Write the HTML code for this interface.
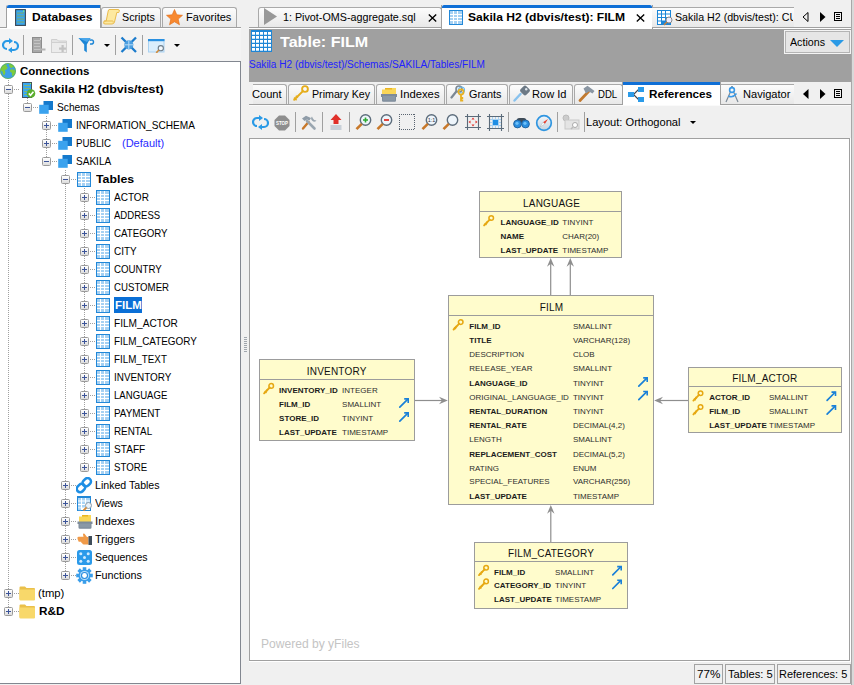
<!DOCTYPE html><html><head><meta charset='utf-8'><style>
html,body{margin:0;padding:0}
body{width:854px;height:685px;position:relative;overflow:hidden;background:#f0f0f0;font-family:'Liberation Sans',sans-serif}
.t{position:absolute;white-space:pre;line-height:1}
.b{position:absolute;display:block}
</style></head><body>
<div class='b' style='left:851px;top:0px;width:3px;height:685px;background:#d9d9d9;border-left:1px solid #a8a8a8;box-sizing:border-box'></div>
<div class='b' style='left:0px;top:28px;width:241px;height:33px;background:#f3f3f3'></div>
<div class='b' style='left:0px;top:27px;width:241px;height:1px;background:#a0a0a0'></div>
<div class='b' style='left:0px;top:28px;width:241px;height:1px;background:#fff'></div>
<div class='b' style='left:6px;top:5px;width:95px;height:23px;background:#fff;border-left:1px solid #a0a0a0;border-right:1px solid #a0a0a0;box-sizing:border-box;border-top-left-radius:2px'></div>
<div class='b' style='left:7px;top:5px;width:93px;height:3px;background:#0f6fd6;border-top-left-radius:2px'></div>
<div class='b' style='left:101px;top:7px;width:60px;height:20px;background:linear-gradient(#fcfcfc,#e8e8e8);border:1px solid #a9a9a9;border-bottom:none;border-radius:3px 3px 0 0;box-sizing:border-box'></div>
<div class='b' style='left:162px;top:7px;width:75px;height:20px;background:linear-gradient(#fcfcfc,#e8e8e8);border:1px solid #a9a9a9;border-bottom:none;border-radius:3px 3px 0 0;box-sizing:border-box'></div>
<svg class='b' style='left:15px;top:9px;' width='11' height='17' viewBox='0 0 11 17'><rect x='0' y='0' width='11' height='17' fill='#3e4c5a' rx='0.5'/><rect x='1.2' y='1.2' width='8.6' height='14.6' fill='#38a8f0'/><g fill='#8da650'><rect x='2' y='3.6' width='7' height='0.9'/><rect x='2' y='6.6' width='7' height='0.9'/><rect x='2' y='9.6' width='7' height='0.9'/><rect x='2' y='12.6' width='7' height='0.9'/></g><rect x='8' y='1.5' width='1.3' height='1.2' fill='#8f6'/></svg>
<div class='t' style='left:32px;top:11.69px;font-size:11px;font-weight:700;color:#000;transform:scaleX(1.099);transform-origin:0 0;'>Databases</div>
<svg class='b' style='left:103px;top:8px;' width='17' height='17' viewBox='0 0 17 17'><path d='M6 1.5 H15 Q17 1.5 16.2 3.5 L15.8 4.5 H13.8 L11.5 14 Q11 16 9 16 H2 Q0 16 0.8 14 L1.2 13 H3.2 L5.2 3 Q5.6 1.5 6 1.5Z' fill='#fde9a0' stroke='#e9bb4e' stroke-width='1'/><path d='M1.2 13 H9.5 Q10.5 13 10.2 14.5' fill='none' stroke='#e9bb4e' stroke-width='1'/></svg>
<div class='t' style='left:121.7px;top:11.69px;font-size:11px;font-weight:400;color:#000;transform:scaleX(0.9747);transform-origin:0 0;'>Scripts</div>
<svg class='b' style='left:166px;top:9px;' width='17' height='17' viewBox='0 0 17 17'><path d='M8.5 0.5 L10.8 5.8 L16.5 6.3 L12.2 10.1 L13.5 15.8 L8.5 12.8 L3.5 15.8 L4.8 10.1 L0.5 6.3 L6.2 5.8Z' fill='#f7882f' stroke='#e06a10' stroke-width='0.6'/></svg>
<div class='t' style='left:186px;top:11.69px;font-size:11px;font-weight:400;color:#000;transform:scaleX(1.0034);transform-origin:0 0;'>Favorites</div>
<svg class='b' style='left:2px;top:38px;' width='17' height='15' viewBox='0 0 17 15'><g fill='none' stroke='#2a9ae6' stroke-width='2.2'><path d='M7 3 H5 A4 4 0 0 0 5 11'/><path d='M10 12 H12 A4 4 0 0 0 12 4'/></g><path d='M7 0 L11 3 L7 6Z' fill='#2a9ae6'/><path d='M10 9 L6 12 L10 15Z' fill='#2a9ae6'/></svg>
<div class='b' style='left:23px;top:35px;width:1px;height:20px;background:#a0a0a0'></div>
<svg class='b' style='left:32px;top:37px;' width='14' height='17' viewBox='0 0 14 17'><rect x='0.5' y='0.5' width='9' height='15' fill='#a9a9a9' stroke='#8c8c8c'/><g fill='#c4c4c4'><rect x='2' y='3' width='6' height='1'/><rect x='2' y='6' width='6' height='1'/><rect x='2' y='9' width='6' height='1'/><rect x='2' y='12' width='6' height='1'/></g><rect x='8' y='1.5' width='1' height='1' fill='#fff'/><rect x='8' y='11.5' width='5.5' height='2' fill='#b4b4b4'/></svg>
<svg class='b' style='left:51px;top:38px;' width='17' height='16' viewBox='0 0 17 16'><path d='M0.5 1.5 H6 L7.5 3 H15.5 V14.5 H0.5Z' fill='#e4e4e4' stroke='#cfcfcf'/><rect x='0.5' y='4.5' width='15' height='10' fill='#ececec' stroke='#d0d0d0'/><rect x='10.5' y='7' width='2.2' height='7' fill='#c2c2c2'/><rect x='8' y='9.5' width='7' height='2.2' fill='#c2c2c2'/></svg>
<div class='b' style='left:72px;top:35px;width:1px;height:20px;background:#a0a0a0'></div>
<svg class='b' style='left:78px;top:37px;' width='17' height='17' viewBox='0 0 17 17'><path d='M0.5 1 H12.5 L8.8 7.5 V15.5 L6.2 13.5 V7.5Z' fill='#1d86d6'/><path d='M0.5 1 H12.5 L9 5Z' fill='#4aa6ea'/><path d='M11.5 3.2 Q15.5 2.2 15.5 5 Q15.5 7.5 12 7' fill='none' stroke='#1d86d6' stroke-width='1.5'/></svg>
<svg class='b' style='left:104px;top:44px;' width='6' height='3' viewBox='0 0 6 3'><path d='M0 0H6L3 3Z' fill='#000'/></svg>
<div class='b' style='left:115px;top:35px;width:1px;height:20px;background:#a0a0a0'></div>
<svg class='b' style='left:120px;top:36px;' width='18' height='18' viewBox='0 0 18 18'><g stroke='#1b7bcc' stroke-width='2.3'><path d='M1.5 1.5 L16 16'/><path d='M16 1.5 L1.5 16'/></g><circle cx='8.8' cy='8.8' r='4.6' fill='#4d9fe0'/><path d='M8.8 4.5 V13 M4.5 8.8 H13' stroke='#b8dcf6' stroke-width='1'/></svg>
<div class='b' style='left:142px;top:35px;width:1px;height:20px;background:#a0a0a0'></div>
<svg class='b' style='left:148px;top:39px;' width='17' height='14' viewBox='0 0 17 14'><rect x='0.5' y='0.5' width='15.5' height='12.5' fill='#dbeefc' stroke='#a9d2f2'/><rect x='0' y='0' width='16.5' height='2.2' fill='#2a90e0'/><circle cx='12.8' cy='9.2' r='2.6' fill='#f4f8fb' stroke='#6e7e8c' stroke-width='1.1'/><path d='M11 11 L8.2 13.8' stroke='#d08a3a' stroke-width='1.7'/></svg>
<svg class='b' style='left:174px;top:44px;' width='6' height='3' viewBox='0 0 6 3'><path d='M0 0H6L3 3Z' fill='#000'/></svg>
<div class='b' style='left:0px;top:61px;width:241px;height:623px;background:#fff;border-top:1px solid #828790;border-right:1px solid #828790;border-bottom:1px solid #828790;box-sizing:border-box'></div>
<div class='b' style='left:8px;top:80px;width:1px;height:532px;background:repeating-linear-gradient(180deg,#a0a0a0 0 1px,transparent 1px 2px)'></div>
<div class='b' style='left:27px;top:98px;width:1px;height:10px;background:repeating-linear-gradient(180deg,#a0a0a0 0 1px,transparent 1px 2px)'></div>
<div class='b' style='left:46px;top:116px;width:1px;height:46px;background:repeating-linear-gradient(180deg,#a0a0a0 0 1px,transparent 1px 2px)'></div>
<div class='b' style='left:65px;top:170px;width:1px;height:406px;background:repeating-linear-gradient(180deg,#a0a0a0 0 1px,transparent 1px 2px)'></div>
<div class='b' style='left:84px;top:188px;width:1px;height:280px;background:repeating-linear-gradient(180deg,#a0a0a0 0 1px,transparent 1px 2px)'></div>
<svg class='b' style='left:0px;top:63px;' width='17' height='17' viewBox='0 0 17 17'><circle cx='8' cy='8' r='7.8' fill='#3d9fe6'/><path d='M2.2 3.2 Q4.5 1 7 1.2 L6.2 3 L7.8 4.2 L6.5 6.5 L4.8 7 L5.5 9.5 L4.2 12.5 L3 11 L2.6 8.8 L0.6 7.2 Q0.8 5 2.2 3.2Z' fill='#7dcb3c'/><path d='M9.5 0.8 Q13 1.6 14.8 4.5 L12.5 4 L11.5 5.5 L10 4.2 L9 2.2Z M9.8 6.8 L13 6.2 L15.4 8 Q15.2 11 13 13 L11.8 12.2 L12 10 L10.2 8.8Z' fill='#7dcb3c'/><circle cx='8' cy='8' r='7.6' fill='none' stroke='#5bb33a' stroke-width='0.7'/></svg>
<div class='t' style='left:19.5px;top:65.69px;font-size:11px;font-weight:700;color:#000;transform:scaleX(1.0423);transform-origin:0 0;'>Connections</div>
<div class='b' style='left:4px;top:85px;width:9px;height:9px;box-sizing:border-box;border:1px solid #9a9a9a;border-radius:1.5px;background:linear-gradient(#fff,#dcdcdc)'></div>
<div class='b' style='left:6px;top:89px;width:5px;height:1px;background:#3c5499'></div>
<div class='b' style='left:14px;top:89px;width:5px;height:1px;background:repeating-linear-gradient(90deg,#a0a0a0 0 1px,transparent 1px 2px)'></div>
<svg class='b' style='left:19px;top:81px;' width='17' height='17' viewBox='0 0 17 17'><rect x='3' y='1' width='10' height='16' fill='#44515e'/><rect x='4' y='2' width='8' height='14' fill='#3aa8f0'/><g fill='#9ab852'><rect x='5' y='4' width='6' height='0.8'/><rect x='5' y='7' width='6' height='0.8'/><rect x='5' y='10' width='6' height='0.8'/><rect x='5' y='13' width='6' height='0.8'/></g><rect x='11' y='2' width='1' height='1' fill='#8f6'/><circle cx='12' cy='12.5' r='4.3' fill='#5aae2e'/><path d='M9.8 12.4 L11.5 14.2 L14.4 10.8' fill='none' stroke='#fff' stroke-width='1.6'/></svg>
<div class='t' style='left:38.5px;top:83.69px;font-size:11px;font-weight:700;color:#000;transform:scaleX(1.1272);transform-origin:0 0;'>Sakila H2 (dbvis/test)</div>
<div class='b' style='left:23px;top:103px;width:9px;height:9px;box-sizing:border-box;border:1px solid #9a9a9a;border-radius:1.5px;background:linear-gradient(#fff,#dcdcdc)'></div>
<div class='b' style='left:25px;top:107px;width:5px;height:1px;background:#3c5499'></div>
<div class='b' style='left:33px;top:107px;width:5px;height:1px;background:repeating-linear-gradient(90deg,#a0a0a0 0 1px,transparent 1px 2px)'></div>
<svg class='b' style='left:38px;top:99px;' width='17' height='17' viewBox='0 0 17 17'><rect x='5.5' y='2' width='9.5' height='9' fill='#1479cc'/><rect x='1.2' y='5.8' width='9.5' height='9' fill='#3aa2ee'/></svg>
<div class='t' style='left:57px;top:101.69px;font-size:11px;font-weight:400;color:#000;transform:scaleX(0.9296);transform-origin:0 0;'>Schemas</div>
<div class='b' style='left:42px;top:121px;width:9px;height:9px;box-sizing:border-box;border:1px solid #9a9a9a;border-radius:1.5px;background:linear-gradient(#fff,#dcdcdc)'></div>
<div class='b' style='left:44px;top:125px;width:5px;height:1px;background:#3c5499'></div>
<div class='b' style='left:46px;top:123px;width:1px;height:5px;background:#3c5499'></div>
<div class='b' style='left:52px;top:125px;width:5px;height:1px;background:repeating-linear-gradient(90deg,#a0a0a0 0 1px,transparent 1px 2px)'></div>
<svg class='b' style='left:57px;top:117px;' width='17' height='17' viewBox='0 0 17 17'><rect x='5.5' y='2' width='9.5' height='9' fill='#1479cc'/><rect x='1.2' y='5.8' width='9.5' height='9' fill='#3aa2ee'/></svg>
<div class='t' style='left:76px;top:119.69px;font-size:11px;font-weight:400;color:#000;transform:scaleX(0.9193);transform-origin:0 0;'>INFORMATION_SCHEMA</div>
<div class='b' style='left:42px;top:139px;width:9px;height:9px;box-sizing:border-box;border:1px solid #9a9a9a;border-radius:1.5px;background:linear-gradient(#fff,#dcdcdc)'></div>
<div class='b' style='left:44px;top:143px;width:5px;height:1px;background:#3c5499'></div>
<div class='b' style='left:46px;top:141px;width:1px;height:5px;background:#3c5499'></div>
<div class='b' style='left:52px;top:143px;width:5px;height:1px;background:repeating-linear-gradient(90deg,#a0a0a0 0 1px,transparent 1px 2px)'></div>
<svg class='b' style='left:57px;top:135px;' width='17' height='17' viewBox='0 0 17 17'><rect x='5.5' y='2' width='9.5' height='9' fill='#1479cc'/><rect x='1.2' y='5.8' width='9.5' height='9' fill='#3aa2ee'/></svg>
<div class='t' style='left:76px;top:137.69px;font-size:11px;font-weight:400;color:#000;transform:scaleX(0.8826);transform-origin:0 0;'>PUBLIC</div>
<div class='t' style='left:121.7px;top:137.69px;font-size:11px;font-weight:400;color:#2a2aff;transform:scaleX(1.0003);transform-origin:0 0;'>(Default)</div>
<div class='b' style='left:42px;top:157px;width:9px;height:9px;box-sizing:border-box;border:1px solid #9a9a9a;border-radius:1.5px;background:linear-gradient(#fff,#dcdcdc)'></div>
<div class='b' style='left:44px;top:161px;width:5px;height:1px;background:#3c5499'></div>
<div class='b' style='left:52px;top:161px;width:5px;height:1px;background:repeating-linear-gradient(90deg,#a0a0a0 0 1px,transparent 1px 2px)'></div>
<svg class='b' style='left:57px;top:153px;' width='17' height='17' viewBox='0 0 17 17'><rect x='5.5' y='2' width='9.5' height='9' fill='#1479cc'/><rect x='1.2' y='5.8' width='9.5' height='9' fill='#3aa2ee'/></svg>
<div class='t' style='left:76px;top:155.69px;font-size:11px;font-weight:400;color:#000;transform:scaleX(0.9139);transform-origin:0 0;'>SAKILA</div>
<div class='b' style='left:61px;top:175px;width:9px;height:9px;box-sizing:border-box;border:1px solid #9a9a9a;border-radius:1.5px;background:linear-gradient(#fff,#dcdcdc)'></div>
<div class='b' style='left:63px;top:179px;width:5px;height:1px;background:#3c5499'></div>
<div class='b' style='left:71px;top:179px;width:5px;height:1px;background:repeating-linear-gradient(90deg,#a0a0a0 0 1px,transparent 1px 2px)'></div>
<svg class='b' style='left:76px;top:171px;' width='17' height='17' viewBox='0 0 17 17'><g shape-rendering='crispEdges'><rect x='1' y='1' width='14' height='15' fill='#2288d8'/><rect x='2' y='2' width='12' height='13' fill='#fff'/><g fill='#a6d1f3'><rect x='2' y='2' width='3' height='3'/><rect x='2' y='6' width='3' height='2'/><rect x='2' y='9' width='3' height='2'/><rect x='2' y='12' width='3' height='3'/><rect x='6' y='2' width='3' height='3'/><rect x='6' y='6' width='3' height='2'/><rect x='6' y='9' width='3' height='2'/><rect x='6' y='12' width='3' height='3'/><rect x='10' y='2' width='4' height='3'/><rect x='10' y='6' width='4' height='2'/><rect x='10' y='9' width='4' height='2'/><rect x='10' y='12' width='4' height='3'/></g></g></svg>
<div class='t' style='left:95.5px;top:173.69px;font-size:11px;font-weight:700;color:#000;transform:scaleX(1.1202);transform-origin:0 0;'>Tables</div>
<div class='b' style='left:80px;top:193px;width:9px;height:9px;box-sizing:border-box;border:1px solid #9a9a9a;border-radius:1.5px;background:linear-gradient(#fff,#dcdcdc)'></div>
<div class='b' style='left:82px;top:197px;width:5px;height:1px;background:#3c5499'></div>
<div class='b' style='left:84px;top:195px;width:1px;height:5px;background:#3c5499'></div>
<div class='b' style='left:90px;top:197px;width:5px;height:1px;background:repeating-linear-gradient(90deg,#a0a0a0 0 1px,transparent 1px 2px)'></div>
<svg class='b' style='left:95px;top:189px;' width='17' height='17' viewBox='0 0 17 17'><g shape-rendering='crispEdges'><rect x='1' y='1' width='14' height='15' fill='#2288d8'/><rect x='2' y='2' width='12' height='13' fill='#fff'/><g fill='#a6d1f3'><rect x='2' y='2' width='3' height='3'/><rect x='2' y='6' width='3' height='2'/><rect x='2' y='9' width='3' height='2'/><rect x='2' y='12' width='3' height='3'/><rect x='6' y='2' width='3' height='3'/><rect x='6' y='6' width='3' height='2'/><rect x='6' y='9' width='3' height='2'/><rect x='6' y='12' width='3' height='3'/><rect x='10' y='2' width='4' height='3'/><rect x='10' y='6' width='4' height='2'/><rect x='10' y='9' width='4' height='2'/><rect x='10' y='12' width='4' height='3'/></g></g></svg>
<div class='t' style='left:114px;top:191.69px;font-size:11px;font-weight:400;color:#000;transform:scaleX(0.9112);transform-origin:0 0;'>ACTOR</div>
<div class='b' style='left:80px;top:211px;width:9px;height:9px;box-sizing:border-box;border:1px solid #9a9a9a;border-radius:1.5px;background:linear-gradient(#fff,#dcdcdc)'></div>
<div class='b' style='left:82px;top:215px;width:5px;height:1px;background:#3c5499'></div>
<div class='b' style='left:84px;top:213px;width:1px;height:5px;background:#3c5499'></div>
<div class='b' style='left:90px;top:215px;width:5px;height:1px;background:repeating-linear-gradient(90deg,#a0a0a0 0 1px,transparent 1px 2px)'></div>
<svg class='b' style='left:95px;top:207px;' width='17' height='17' viewBox='0 0 17 17'><g shape-rendering='crispEdges'><rect x='1' y='1' width='14' height='15' fill='#2288d8'/><rect x='2' y='2' width='12' height='13' fill='#fff'/><g fill='#a6d1f3'><rect x='2' y='2' width='3' height='3'/><rect x='2' y='6' width='3' height='2'/><rect x='2' y='9' width='3' height='2'/><rect x='2' y='12' width='3' height='3'/><rect x='6' y='2' width='3' height='3'/><rect x='6' y='6' width='3' height='2'/><rect x='6' y='9' width='3' height='2'/><rect x='6' y='12' width='3' height='3'/><rect x='10' y='2' width='4' height='3'/><rect x='10' y='6' width='4' height='2'/><rect x='10' y='9' width='4' height='2'/><rect x='10' y='12' width='4' height='3'/></g></g></svg>
<div class='t' style='left:114px;top:209.69px;font-size:11px;font-weight:400;color:#000;transform:scaleX(0.868);transform-origin:0 0;'>ADDRESS</div>
<div class='b' style='left:80px;top:229px;width:9px;height:9px;box-sizing:border-box;border:1px solid #9a9a9a;border-radius:1.5px;background:linear-gradient(#fff,#dcdcdc)'></div>
<div class='b' style='left:82px;top:233px;width:5px;height:1px;background:#3c5499'></div>
<div class='b' style='left:84px;top:231px;width:1px;height:5px;background:#3c5499'></div>
<div class='b' style='left:90px;top:233px;width:5px;height:1px;background:repeating-linear-gradient(90deg,#a0a0a0 0 1px,transparent 1px 2px)'></div>
<svg class='b' style='left:95px;top:225px;' width='17' height='17' viewBox='0 0 17 17'><g shape-rendering='crispEdges'><rect x='1' y='1' width='14' height='15' fill='#2288d8'/><rect x='2' y='2' width='12' height='13' fill='#fff'/><g fill='#a6d1f3'><rect x='2' y='2' width='3' height='3'/><rect x='2' y='6' width='3' height='2'/><rect x='2' y='9' width='3' height='2'/><rect x='2' y='12' width='3' height='3'/><rect x='6' y='2' width='3' height='3'/><rect x='6' y='6' width='3' height='2'/><rect x='6' y='9' width='3' height='2'/><rect x='6' y='12' width='3' height='3'/><rect x='10' y='2' width='4' height='3'/><rect x='10' y='6' width='4' height='2'/><rect x='10' y='9' width='4' height='2'/><rect x='10' y='12' width='4' height='3'/></g></g></svg>
<div class='t' style='left:114px;top:227.69px;font-size:11px;font-weight:400;color:#000;transform:scaleX(0.8825);transform-origin:0 0;'>CATEGORY</div>
<div class='b' style='left:80px;top:247px;width:9px;height:9px;box-sizing:border-box;border:1px solid #9a9a9a;border-radius:1.5px;background:linear-gradient(#fff,#dcdcdc)'></div>
<div class='b' style='left:82px;top:251px;width:5px;height:1px;background:#3c5499'></div>
<div class='b' style='left:84px;top:249px;width:1px;height:5px;background:#3c5499'></div>
<div class='b' style='left:90px;top:251px;width:5px;height:1px;background:repeating-linear-gradient(90deg,#a0a0a0 0 1px,transparent 1px 2px)'></div>
<svg class='b' style='left:95px;top:243px;' width='17' height='17' viewBox='0 0 17 17'><g shape-rendering='crispEdges'><rect x='1' y='1' width='14' height='15' fill='#2288d8'/><rect x='2' y='2' width='12' height='13' fill='#fff'/><g fill='#a6d1f3'><rect x='2' y='2' width='3' height='3'/><rect x='2' y='6' width='3' height='2'/><rect x='2' y='9' width='3' height='2'/><rect x='2' y='12' width='3' height='3'/><rect x='6' y='2' width='3' height='3'/><rect x='6' y='6' width='3' height='2'/><rect x='6' y='9' width='3' height='2'/><rect x='6' y='12' width='3' height='3'/><rect x='10' y='2' width='4' height='3'/><rect x='10' y='6' width='4' height='2'/><rect x='10' y='9' width='4' height='2'/><rect x='10' y='12' width='4' height='3'/></g></g></svg>
<div class='t' style='left:114px;top:245.69px;font-size:11px;font-weight:400;color:#000;transform:scaleX(0.9018);transform-origin:0 0;'>CITY</div>
<div class='b' style='left:80px;top:265px;width:9px;height:9px;box-sizing:border-box;border:1px solid #9a9a9a;border-radius:1.5px;background:linear-gradient(#fff,#dcdcdc)'></div>
<div class='b' style='left:82px;top:269px;width:5px;height:1px;background:#3c5499'></div>
<div class='b' style='left:84px;top:267px;width:1px;height:5px;background:#3c5499'></div>
<div class='b' style='left:90px;top:269px;width:5px;height:1px;background:repeating-linear-gradient(90deg,#a0a0a0 0 1px,transparent 1px 2px)'></div>
<svg class='b' style='left:95px;top:261px;' width='17' height='17' viewBox='0 0 17 17'><g shape-rendering='crispEdges'><rect x='1' y='1' width='14' height='15' fill='#2288d8'/><rect x='2' y='2' width='12' height='13' fill='#fff'/><g fill='#a6d1f3'><rect x='2' y='2' width='3' height='3'/><rect x='2' y='6' width='3' height='2'/><rect x='2' y='9' width='3' height='2'/><rect x='2' y='12' width='3' height='3'/><rect x='6' y='2' width='3' height='3'/><rect x='6' y='6' width='3' height='2'/><rect x='6' y='9' width='3' height='2'/><rect x='6' y='12' width='3' height='3'/><rect x='10' y='2' width='4' height='3'/><rect x='10' y='6' width='4' height='2'/><rect x='10' y='9' width='4' height='2'/><rect x='10' y='12' width='4' height='3'/></g></g></svg>
<div class='t' style='left:114px;top:263.69px;font-size:11px;font-weight:400;color:#000;transform:scaleX(0.8815);transform-origin:0 0;'>COUNTRY</div>
<div class='b' style='left:80px;top:283px;width:9px;height:9px;box-sizing:border-box;border:1px solid #9a9a9a;border-radius:1.5px;background:linear-gradient(#fff,#dcdcdc)'></div>
<div class='b' style='left:82px;top:287px;width:5px;height:1px;background:#3c5499'></div>
<div class='b' style='left:84px;top:285px;width:1px;height:5px;background:#3c5499'></div>
<div class='b' style='left:90px;top:287px;width:5px;height:1px;background:repeating-linear-gradient(90deg,#a0a0a0 0 1px,transparent 1px 2px)'></div>
<svg class='b' style='left:95px;top:279px;' width='17' height='17' viewBox='0 0 17 17'><g shape-rendering='crispEdges'><rect x='1' y='1' width='14' height='15' fill='#2288d8'/><rect x='2' y='2' width='12' height='13' fill='#fff'/><g fill='#a6d1f3'><rect x='2' y='2' width='3' height='3'/><rect x='2' y='6' width='3' height='2'/><rect x='2' y='9' width='3' height='2'/><rect x='2' y='12' width='3' height='3'/><rect x='6' y='2' width='3' height='3'/><rect x='6' y='6' width='3' height='2'/><rect x='6' y='9' width='3' height='2'/><rect x='6' y='12' width='3' height='3'/><rect x='10' y='2' width='4' height='3'/><rect x='10' y='6' width='4' height='2'/><rect x='10' y='9' width='4' height='2'/><rect x='10' y='12' width='4' height='3'/></g></g></svg>
<div class='t' style='left:114px;top:281.69px;font-size:11px;font-weight:400;color:#000;transform:scaleX(0.8777);transform-origin:0 0;'>CUSTOMER</div>
<div class='b' style='left:80px;top:301px;width:9px;height:9px;box-sizing:border-box;border:1px solid #9a9a9a;border-radius:1.5px;background:linear-gradient(#fff,#dcdcdc)'></div>
<div class='b' style='left:82px;top:305px;width:5px;height:1px;background:#3c5499'></div>
<div class='b' style='left:84px;top:303px;width:1px;height:5px;background:#3c5499'></div>
<div class='b' style='left:90px;top:305px;width:5px;height:1px;background:repeating-linear-gradient(90deg,#a0a0a0 0 1px,transparent 1px 2px)'></div>
<svg class='b' style='left:95px;top:297px;' width='17' height='17' viewBox='0 0 17 17'><g shape-rendering='crispEdges'><rect x='1' y='1' width='14' height='15' fill='#2288d8'/><rect x='2' y='2' width='12' height='13' fill='#fff'/><g fill='#a6d1f3'><rect x='2' y='2' width='3' height='3'/><rect x='2' y='6' width='3' height='2'/><rect x='2' y='9' width='3' height='2'/><rect x='2' y='12' width='3' height='3'/><rect x='6' y='2' width='3' height='3'/><rect x='6' y='6' width='3' height='2'/><rect x='6' y='9' width='3' height='2'/><rect x='6' y='12' width='3' height='3'/><rect x='10' y='2' width='4' height='3'/><rect x='10' y='6' width='4' height='2'/><rect x='10' y='9' width='4' height='2'/><rect x='10' y='12' width='4' height='3'/></g></g></svg>
<div class='b' style='left:114px;top:297px;width:28px;height:16px;background:#0a6fd6'></div>
<div class='t' style='left:115px;top:299.69px;font-size:11px;font-weight:700;color:#fff;transform:scaleX(1.0457);transform-origin:0 0;'>FILM</div>
<div class='b' style='left:80px;top:319px;width:9px;height:9px;box-sizing:border-box;border:1px solid #9a9a9a;border-radius:1.5px;background:linear-gradient(#fff,#dcdcdc)'></div>
<div class='b' style='left:82px;top:323px;width:5px;height:1px;background:#3c5499'></div>
<div class='b' style='left:84px;top:321px;width:1px;height:5px;background:#3c5499'></div>
<div class='b' style='left:90px;top:323px;width:5px;height:1px;background:repeating-linear-gradient(90deg,#a0a0a0 0 1px,transparent 1px 2px)'></div>
<svg class='b' style='left:95px;top:315px;' width='17' height='17' viewBox='0 0 17 17'><g shape-rendering='crispEdges'><rect x='1' y='1' width='14' height='15' fill='#2288d8'/><rect x='2' y='2' width='12' height='13' fill='#fff'/><g fill='#a6d1f3'><rect x='2' y='2' width='3' height='3'/><rect x='2' y='6' width='3' height='2'/><rect x='2' y='9' width='3' height='2'/><rect x='2' y='12' width='3' height='3'/><rect x='6' y='2' width='3' height='3'/><rect x='6' y='6' width='3' height='2'/><rect x='6' y='9' width='3' height='2'/><rect x='6' y='12' width='3' height='3'/><rect x='10' y='2' width='4' height='3'/><rect x='10' y='6' width='4' height='2'/><rect x='10' y='9' width='4' height='2'/><rect x='10' y='12' width='4' height='3'/></g></g></svg>
<div class='t' style='left:114px;top:317.69px;font-size:11px;font-weight:400;color:#000;transform:scaleX(0.9199);transform-origin:0 0;'>FILM_ACTOR</div>
<div class='b' style='left:80px;top:337px;width:9px;height:9px;box-sizing:border-box;border:1px solid #9a9a9a;border-radius:1.5px;background:linear-gradient(#fff,#dcdcdc)'></div>
<div class='b' style='left:82px;top:341px;width:5px;height:1px;background:#3c5499'></div>
<div class='b' style='left:84px;top:339px;width:1px;height:5px;background:#3c5499'></div>
<div class='b' style='left:90px;top:341px;width:5px;height:1px;background:repeating-linear-gradient(90deg,#a0a0a0 0 1px,transparent 1px 2px)'></div>
<svg class='b' style='left:95px;top:333px;' width='17' height='17' viewBox='0 0 17 17'><g shape-rendering='crispEdges'><rect x='1' y='1' width='14' height='15' fill='#2288d8'/><rect x='2' y='2' width='12' height='13' fill='#fff'/><g fill='#a6d1f3'><rect x='2' y='2' width='3' height='3'/><rect x='2' y='6' width='3' height='2'/><rect x='2' y='9' width='3' height='2'/><rect x='2' y='12' width='3' height='3'/><rect x='6' y='2' width='3' height='3'/><rect x='6' y='6' width='3' height='2'/><rect x='6' y='9' width='3' height='2'/><rect x='6' y='12' width='3' height='3'/><rect x='10' y='2' width='4' height='3'/><rect x='10' y='6' width='4' height='2'/><rect x='10' y='9' width='4' height='2'/><rect x='10' y='12' width='4' height='3'/></g></g></svg>
<div class='t' style='left:114px;top:335.69px;font-size:11px;font-weight:400;color:#000;transform:scaleX(0.9022);transform-origin:0 0;'>FILM_CATEGORY</div>
<div class='b' style='left:80px;top:355px;width:9px;height:9px;box-sizing:border-box;border:1px solid #9a9a9a;border-radius:1.5px;background:linear-gradient(#fff,#dcdcdc)'></div>
<div class='b' style='left:82px;top:359px;width:5px;height:1px;background:#3c5499'></div>
<div class='b' style='left:84px;top:357px;width:1px;height:5px;background:#3c5499'></div>
<div class='b' style='left:90px;top:359px;width:5px;height:1px;background:repeating-linear-gradient(90deg,#a0a0a0 0 1px,transparent 1px 2px)'></div>
<svg class='b' style='left:95px;top:351px;' width='17' height='17' viewBox='0 0 17 17'><g shape-rendering='crispEdges'><rect x='1' y='1' width='14' height='15' fill='#2288d8'/><rect x='2' y='2' width='12' height='13' fill='#fff'/><g fill='#a6d1f3'><rect x='2' y='2' width='3' height='3'/><rect x='2' y='6' width='3' height='2'/><rect x='2' y='9' width='3' height='2'/><rect x='2' y='12' width='3' height='3'/><rect x='6' y='2' width='3' height='3'/><rect x='6' y='6' width='3' height='2'/><rect x='6' y='9' width='3' height='2'/><rect x='6' y='12' width='3' height='3'/><rect x='10' y='2' width='4' height='3'/><rect x='10' y='6' width='4' height='2'/><rect x='10' y='9' width='4' height='2'/><rect x='10' y='12' width='4' height='3'/></g></g></svg>
<div class='t' style='left:114px;top:353.69px;font-size:11px;font-weight:400;color:#000;transform:scaleX(0.892);transform-origin:0 0;'>FILM_TEXT</div>
<div class='b' style='left:80px;top:373px;width:9px;height:9px;box-sizing:border-box;border:1px solid #9a9a9a;border-radius:1.5px;background:linear-gradient(#fff,#dcdcdc)'></div>
<div class='b' style='left:82px;top:377px;width:5px;height:1px;background:#3c5499'></div>
<div class='b' style='left:84px;top:375px;width:1px;height:5px;background:#3c5499'></div>
<div class='b' style='left:90px;top:377px;width:5px;height:1px;background:repeating-linear-gradient(90deg,#a0a0a0 0 1px,transparent 1px 2px)'></div>
<svg class='b' style='left:95px;top:369px;' width='17' height='17' viewBox='0 0 17 17'><g shape-rendering='crispEdges'><rect x='1' y='1' width='14' height='15' fill='#2288d8'/><rect x='2' y='2' width='12' height='13' fill='#fff'/><g fill='#a6d1f3'><rect x='2' y='2' width='3' height='3'/><rect x='2' y='6' width='3' height='2'/><rect x='2' y='9' width='3' height='2'/><rect x='2' y='12' width='3' height='3'/><rect x='6' y='2' width='3' height='3'/><rect x='6' y='6' width='3' height='2'/><rect x='6' y='9' width='3' height='2'/><rect x='6' y='12' width='3' height='3'/><rect x='10' y='2' width='4' height='3'/><rect x='10' y='6' width='4' height='2'/><rect x='10' y='9' width='4' height='2'/><rect x='10' y='12' width='4' height='3'/></g></g></svg>
<div class='t' style='left:114px;top:371.69px;font-size:11px;font-weight:400;color:#000;transform:scaleX(0.9);transform-origin:0 0;'>INVENTORY</div>
<div class='b' style='left:80px;top:391px;width:9px;height:9px;box-sizing:border-box;border:1px solid #9a9a9a;border-radius:1.5px;background:linear-gradient(#fff,#dcdcdc)'></div>
<div class='b' style='left:82px;top:395px;width:5px;height:1px;background:#3c5499'></div>
<div class='b' style='left:84px;top:393px;width:1px;height:5px;background:#3c5499'></div>
<div class='b' style='left:90px;top:395px;width:5px;height:1px;background:repeating-linear-gradient(90deg,#a0a0a0 0 1px,transparent 1px 2px)'></div>
<svg class='b' style='left:95px;top:387px;' width='17' height='17' viewBox='0 0 17 17'><g shape-rendering='crispEdges'><rect x='1' y='1' width='14' height='15' fill='#2288d8'/><rect x='2' y='2' width='12' height='13' fill='#fff'/><g fill='#a6d1f3'><rect x='2' y='2' width='3' height='3'/><rect x='2' y='6' width='3' height='2'/><rect x='2' y='9' width='3' height='2'/><rect x='2' y='12' width='3' height='3'/><rect x='6' y='2' width='3' height='3'/><rect x='6' y='6' width='3' height='2'/><rect x='6' y='9' width='3' height='2'/><rect x='6' y='12' width='3' height='3'/><rect x='10' y='2' width='4' height='3'/><rect x='10' y='6' width='4' height='2'/><rect x='10' y='9' width='4' height='2'/><rect x='10' y='12' width='4' height='3'/></g></g></svg>
<div class='t' style='left:114px;top:389.69px;font-size:11px;font-weight:400;color:#000;transform:scaleX(0.873);transform-origin:0 0;'>LANGUAGE</div>
<div class='b' style='left:80px;top:409px;width:9px;height:9px;box-sizing:border-box;border:1px solid #9a9a9a;border-radius:1.5px;background:linear-gradient(#fff,#dcdcdc)'></div>
<div class='b' style='left:82px;top:413px;width:5px;height:1px;background:#3c5499'></div>
<div class='b' style='left:84px;top:411px;width:1px;height:5px;background:#3c5499'></div>
<div class='b' style='left:90px;top:413px;width:5px;height:1px;background:repeating-linear-gradient(90deg,#a0a0a0 0 1px,transparent 1px 2px)'></div>
<svg class='b' style='left:95px;top:405px;' width='17' height='17' viewBox='0 0 17 17'><g shape-rendering='crispEdges'><rect x='1' y='1' width='14' height='15' fill='#2288d8'/><rect x='2' y='2' width='12' height='13' fill='#fff'/><g fill='#a6d1f3'><rect x='2' y='2' width='3' height='3'/><rect x='2' y='6' width='3' height='2'/><rect x='2' y='9' width='3' height='2'/><rect x='2' y='12' width='3' height='3'/><rect x='6' y='2' width='3' height='3'/><rect x='6' y='6' width='3' height='2'/><rect x='6' y='9' width='3' height='2'/><rect x='6' y='12' width='3' height='3'/><rect x='10' y='2' width='4' height='3'/><rect x='10' y='6' width='4' height='2'/><rect x='10' y='9' width='4' height='2'/><rect x='10' y='12' width='4' height='3'/></g></g></svg>
<div class='t' style='left:114px;top:407.69px;font-size:11px;font-weight:400;color:#000;transform:scaleX(0.9002);transform-origin:0 0;'>PAYMENT</div>
<div class='b' style='left:80px;top:427px;width:9px;height:9px;box-sizing:border-box;border:1px solid #9a9a9a;border-radius:1.5px;background:linear-gradient(#fff,#dcdcdc)'></div>
<div class='b' style='left:82px;top:431px;width:5px;height:1px;background:#3c5499'></div>
<div class='b' style='left:84px;top:429px;width:1px;height:5px;background:#3c5499'></div>
<div class='b' style='left:90px;top:431px;width:5px;height:1px;background:repeating-linear-gradient(90deg,#a0a0a0 0 1px,transparent 1px 2px)'></div>
<svg class='b' style='left:95px;top:423px;' width='17' height='17' viewBox='0 0 17 17'><g shape-rendering='crispEdges'><rect x='1' y='1' width='14' height='15' fill='#2288d8'/><rect x='2' y='2' width='12' height='13' fill='#fff'/><g fill='#a6d1f3'><rect x='2' y='2' width='3' height='3'/><rect x='2' y='6' width='3' height='2'/><rect x='2' y='9' width='3' height='2'/><rect x='2' y='12' width='3' height='3'/><rect x='6' y='2' width='3' height='3'/><rect x='6' y='6' width='3' height='2'/><rect x='6' y='9' width='3' height='2'/><rect x='6' y='12' width='3' height='3'/><rect x='10' y='2' width='4' height='3'/><rect x='10' y='6' width='4' height='2'/><rect x='10' y='9' width='4' height='2'/><rect x='10' y='12' width='4' height='3'/></g></g></svg>
<div class='t' style='left:114px;top:425.69px;font-size:11px;font-weight:400;color:#000;transform:scaleX(0.8968);transform-origin:0 0;'>RENTAL</div>
<div class='b' style='left:80px;top:445px;width:9px;height:9px;box-sizing:border-box;border:1px solid #9a9a9a;border-radius:1.5px;background:linear-gradient(#fff,#dcdcdc)'></div>
<div class='b' style='left:82px;top:449px;width:5px;height:1px;background:#3c5499'></div>
<div class='b' style='left:84px;top:447px;width:1px;height:5px;background:#3c5499'></div>
<div class='b' style='left:90px;top:449px;width:5px;height:1px;background:repeating-linear-gradient(90deg,#a0a0a0 0 1px,transparent 1px 2px)'></div>
<svg class='b' style='left:95px;top:441px;' width='17' height='17' viewBox='0 0 17 17'><g shape-rendering='crispEdges'><rect x='1' y='1' width='14' height='15' fill='#2288d8'/><rect x='2' y='2' width='12' height='13' fill='#fff'/><g fill='#a6d1f3'><rect x='2' y='2' width='3' height='3'/><rect x='2' y='6' width='3' height='2'/><rect x='2' y='9' width='3' height='2'/><rect x='2' y='12' width='3' height='3'/><rect x='6' y='2' width='3' height='3'/><rect x='6' y='6' width='3' height='2'/><rect x='6' y='9' width='3' height='2'/><rect x='6' y='12' width='3' height='3'/><rect x='10' y='2' width='4' height='3'/><rect x='10' y='6' width='4' height='2'/><rect x='10' y='9' width='4' height='2'/><rect x='10' y='12' width='4' height='3'/></g></g></svg>
<div class='t' style='left:114px;top:443.69px;font-size:11px;font-weight:400;color:#000;transform:scaleX(0.9177);transform-origin:0 0;'>STAFF</div>
<div class='b' style='left:80px;top:463px;width:9px;height:9px;box-sizing:border-box;border:1px solid #9a9a9a;border-radius:1.5px;background:linear-gradient(#fff,#dcdcdc)'></div>
<div class='b' style='left:82px;top:467px;width:5px;height:1px;background:#3c5499'></div>
<div class='b' style='left:84px;top:465px;width:1px;height:5px;background:#3c5499'></div>
<div class='b' style='left:90px;top:467px;width:5px;height:1px;background:repeating-linear-gradient(90deg,#a0a0a0 0 1px,transparent 1px 2px)'></div>
<svg class='b' style='left:95px;top:459px;' width='17' height='17' viewBox='0 0 17 17'><g shape-rendering='crispEdges'><rect x='1' y='1' width='14' height='15' fill='#2288d8'/><rect x='2' y='2' width='12' height='13' fill='#fff'/><g fill='#a6d1f3'><rect x='2' y='2' width='3' height='3'/><rect x='2' y='6' width='3' height='2'/><rect x='2' y='9' width='3' height='2'/><rect x='2' y='12' width='3' height='3'/><rect x='6' y='2' width='3' height='3'/><rect x='6' y='6' width='3' height='2'/><rect x='6' y='9' width='3' height='2'/><rect x='6' y='12' width='3' height='3'/><rect x='10' y='2' width='4' height='3'/><rect x='10' y='6' width='4' height='2'/><rect x='10' y='9' width='4' height='2'/><rect x='10' y='12' width='4' height='3'/></g></g></svg>
<div class='t' style='left:114px;top:461.69px;font-size:11px;font-weight:400;color:#000;transform:scaleX(0.8773);transform-origin:0 0;'>STORE</div>
<div class='b' style='left:61px;top:481px;width:9px;height:9px;box-sizing:border-box;border:1px solid #9a9a9a;border-radius:1.5px;background:linear-gradient(#fff,#dcdcdc)'></div>
<div class='b' style='left:63px;top:485px;width:5px;height:1px;background:#3c5499'></div>
<div class='b' style='left:65px;top:483px;width:1px;height:5px;background:#3c5499'></div>
<div class='b' style='left:71px;top:485px;width:5px;height:1px;background:repeating-linear-gradient(90deg,#a0a0a0 0 1px,transparent 1px 2px)'></div>
<svg class='b' style='left:76px;top:477px;' width='17' height='17' viewBox='0 0 17 17'><g transform='rotate(-45 8 8)' fill='none' stroke='#1e8ee4' stroke-width='2.6'><rect x='-0.8' y='4.6' width='9' height='6.8' rx='3.4'/><rect x='7.4' y='4.6' width='9' height='6.8' rx='3.4'/></g></svg>
<div class='t' style='left:95px;top:479.69px;font-size:11px;font-weight:400;color:#000;transform:scaleX(0.9625);transform-origin:0 0;'>Linked Tables</div>
<div class='b' style='left:61px;top:499px;width:9px;height:9px;box-sizing:border-box;border:1px solid #9a9a9a;border-radius:1.5px;background:linear-gradient(#fff,#dcdcdc)'></div>
<div class='b' style='left:63px;top:503px;width:5px;height:1px;background:#3c5499'></div>
<div class='b' style='left:65px;top:501px;width:1px;height:5px;background:#3c5499'></div>
<div class='b' style='left:71px;top:503px;width:5px;height:1px;background:repeating-linear-gradient(90deg,#a0a0a0 0 1px,transparent 1px 2px)'></div>
<svg class='b' style='left:76px;top:495px;' width='17' height='17' viewBox='0 0 17 17'><rect x='1.5' y='1.5' width='13' height='14' fill='#fff' stroke='#2288d8'/><rect x='1' y='1' width='14' height='2' fill='#2288d8'/><g fill='#a9d4f5'><rect x='2' y='3' width='3' height='2.5'/><rect x='6' y='3' width='3' height='2.5'/><rect x='10' y='3' width='4' height='2.5'/><rect x='2' y='6.5' width='3' height='2.5'/><rect x='6' y='6.5' width='3' height='2.5'/><rect x='10' y='6.5' width='4' height='2.5'/><rect x='2' y='10' width='3' height='2.5'/><rect x='6' y='10' width='3' height='2.5'/><rect x='2' y='13.2' width='3' height='2'/></g><circle cx='12.5' cy='10.5' r='3' fill='#e8f2fa' stroke='#8a9aa8' stroke-width='1'/><path d='M10.5 12.5 L7.5 15.5' stroke='#d08a3a' stroke-width='1.8'/></svg>
<div class='t' style='left:95px;top:497.69px;font-size:11px;font-weight:400;color:#000;transform:scaleX(0.9518);transform-origin:0 0;'>Views</div>
<div class='b' style='left:61px;top:517px;width:9px;height:9px;box-sizing:border-box;border:1px solid #9a9a9a;border-radius:1.5px;background:linear-gradient(#fff,#dcdcdc)'></div>
<div class='b' style='left:63px;top:521px;width:5px;height:1px;background:#3c5499'></div>
<div class='b' style='left:65px;top:519px;width:1px;height:5px;background:#3c5499'></div>
<div class='b' style='left:71px;top:521px;width:5px;height:1px;background:repeating-linear-gradient(90deg,#a0a0a0 0 1px,transparent 1px 2px)'></div>
<svg class='b' style='left:76px;top:513px;' width='17' height='17' viewBox='0 0 17 17'><path d='M3 3.5 H6 V2 H15 V9 H3Z' fill='#f9d658'/><rect x='6' y='2' width='6' height='1.5' fill='#eab420'/><path d='M1.5 8.5 H16.5 V11 H15.5 V14.5 Q15.5 15.8 14.3 15.8 H3.7 Q2.5 15.8 2.5 14.5 V11 H1.5Z' fill='#7d8b9a'/><rect x='3.5' y='10.5' width='11' height='4' fill='#8a98a6'/></svg>
<div class='t' style='left:95px;top:515.69px;font-size:11px;font-weight:400;color:#000;transform:scaleX(1.0311);transform-origin:0 0;'>Indexes</div>
<div class='b' style='left:61px;top:535px;width:9px;height:9px;box-sizing:border-box;border:1px solid #9a9a9a;border-radius:1.5px;background:linear-gradient(#fff,#dcdcdc)'></div>
<div class='b' style='left:63px;top:539px;width:5px;height:1px;background:#3c5499'></div>
<div class='b' style='left:65px;top:537px;width:1px;height:5px;background:#3c5499'></div>
<div class='b' style='left:71px;top:539px;width:5px;height:1px;background:repeating-linear-gradient(90deg,#a0a0a0 0 1px,transparent 1px 2px)'></div>
<svg class='b' style='left:76px;top:531px;' width='17' height='17' viewBox='0 0 17 17'><path d='M1.5 7.5 Q1 6 2.5 5.8 H7.5 L7 3.5 Q7 2 8.5 2.8 L11 6 H12.5 V13.5 H8 Q6.5 13.5 6.2 12.3 Q5 12 5.2 10.8 H3.2 Q1.8 10.5 2.2 9.2 Q1.5 8.8 1.5 7.5Z' fill='#f09a48'/><rect x='12.5' y='5' width='3.5' height='9' fill='#3f4d5a'/></svg>
<div class='t' style='left:95px;top:533.69px;font-size:11px;font-weight:400;color:#000;transform:scaleX(0.9939);transform-origin:0 0;'>Triggers</div>
<div class='b' style='left:61px;top:553px;width:9px;height:9px;box-sizing:border-box;border:1px solid #9a9a9a;border-radius:1.5px;background:linear-gradient(#fff,#dcdcdc)'></div>
<div class='b' style='left:63px;top:557px;width:5px;height:1px;background:#3c5499'></div>
<div class='b' style='left:65px;top:555px;width:1px;height:5px;background:#3c5499'></div>
<div class='b' style='left:71px;top:557px;width:5px;height:1px;background:repeating-linear-gradient(90deg,#a0a0a0 0 1px,transparent 1px 2px)'></div>
<svg class='b' style='left:76px;top:549px;' width='17' height='17' viewBox='0 0 17 17'><rect x='1' y='1' width='15' height='15' rx='2.5' fill='#2a9aea'/><g fill='#cfeaff'><circle cx='4.8' cy='4.8' r='1.5'/><circle cx='12.2' cy='4.8' r='1.5'/><circle cx='8.5' cy='8.5' r='1.5'/><circle cx='4.8' cy='12.2' r='1.5'/><circle cx='12.2' cy='12.2' r='1.5'/></g></svg>
<div class='t' style='left:95px;top:551.69px;font-size:11px;font-weight:400;color:#000;transform:scaleX(0.9547);transform-origin:0 0;'>Sequences</div>
<div class='b' style='left:61px;top:571px;width:9px;height:9px;box-sizing:border-box;border:1px solid #9a9a9a;border-radius:1.5px;background:linear-gradient(#fff,#dcdcdc)'></div>
<div class='b' style='left:63px;top:575px;width:5px;height:1px;background:#3c5499'></div>
<div class='b' style='left:65px;top:573px;width:1px;height:5px;background:#3c5499'></div>
<div class='b' style='left:71px;top:575px;width:5px;height:1px;background:repeating-linear-gradient(90deg,#a0a0a0 0 1px,transparent 1px 2px)'></div>
<svg class='b' style='left:76px;top:567px;' width='17' height='17' viewBox='0 0 17 17'><g transform='translate(8.5 8.5)'><g fill='#3a9eea'><rect x='-1.8' y='-8.3' width='3.6' height='4' transform='rotate(0)'/><rect x='-1.8' y='-8.3' width='3.6' height='4' transform='rotate(45)'/><rect x='-1.8' y='-8.3' width='3.6' height='4' transform='rotate(90)'/><rect x='-1.8' y='-8.3' width='3.6' height='4' transform='rotate(135)'/><rect x='-1.8' y='-8.3' width='3.6' height='4' transform='rotate(180)'/><rect x='-1.8' y='-8.3' width='3.6' height='4' transform='rotate(225)'/><rect x='-1.8' y='-8.3' width='3.6' height='4' transform='rotate(270)'/><rect x='-1.8' y='-8.3' width='3.6' height='4' transform='rotate(315)'/></g><circle r='6' fill='#3a9eea'/><circle r='4.6' fill='#bfe0fa'/><circle r='3.6' fill='#2a8ee0'/><circle r='2.4' fill='#fff'/></g></svg>
<div class='t' style='left:95px;top:569.69px;font-size:11px;font-weight:400;color:#000;transform:scaleX(0.9807);transform-origin:0 0;'>Functions</div>
<div class='b' style='left:4px;top:589px;width:9px;height:9px;box-sizing:border-box;border:1px solid #9a9a9a;border-radius:1.5px;background:linear-gradient(#fff,#dcdcdc)'></div>
<div class='b' style='left:6px;top:593px;width:5px;height:1px;background:#3c5499'></div>
<div class='b' style='left:8px;top:591px;width:1px;height:5px;background:#3c5499'></div>
<div class='b' style='left:14px;top:593px;width:5px;height:1px;background:repeating-linear-gradient(90deg,#a0a0a0 0 1px,transparent 1px 2px)'></div>
<svg class='b' style='left:19px;top:585px;' width='17' height='17' viewBox='0 0 17 17'><path d='M0.5 2.5 Q0.5 1.5 1.5 1.5 H6 L7.5 3 H15 Q16 3 16 4 V14.5 H0.5Z' fill='#eac04a'/><path d='M0.5 4.5 H16 V14.5 Q16 15.5 15 15.5 H1.5 Q0.5 15.5 0.5 14.5Z' fill='#f8d86a'/></svg>
<div class='t' style='left:38px;top:587.69px;font-size:11px;font-weight:400;color:#000;transform:scaleX(1.0255);transform-origin:0 0;'>(tmp)</div>
<div class='b' style='left:4px;top:607px;width:9px;height:9px;box-sizing:border-box;border:1px solid #9a9a9a;border-radius:1.5px;background:linear-gradient(#fff,#dcdcdc)'></div>
<div class='b' style='left:6px;top:611px;width:5px;height:1px;background:#3c5499'></div>
<div class='b' style='left:8px;top:609px;width:1px;height:5px;background:#3c5499'></div>
<div class='b' style='left:14px;top:611px;width:5px;height:1px;background:repeating-linear-gradient(90deg,#a0a0a0 0 1px,transparent 1px 2px)'></div>
<svg class='b' style='left:19px;top:603px;' width='17' height='17' viewBox='0 0 17 17'><path d='M0.5 2.5 Q0.5 1.5 1.5 1.5 H6 L7.5 3 H15 Q16 3 16 4 V14.5 H0.5Z' fill='#eac04a'/><path d='M0.5 4.5 H16 V14.5 Q16 15.5 15 15.5 H1.5 Q0.5 15.5 0.5 14.5Z' fill='#f8d86a'/></svg>
<div class='t' style='left:38.5px;top:605.69px;font-size:11px;font-weight:700;color:#000;transform:scaleX(1.0681);transform-origin:0 0;'>R&amp;D</div>
<div class='b' style='left:244px;top:337px;width:3px;height:1px;background:#a0a6ad'></div>
<div class='b' style='left:244px;top:339px;width:3px;height:1px;background:#a0a6ad'></div>
<div class='b' style='left:244px;top:341px;width:3px;height:1px;background:#a0a6ad'></div>
<div class='b' style='left:244px;top:343px;width:3px;height:1px;background:#a0a6ad'></div>
<div class='b' style='left:244px;top:345px;width:3px;height:1px;background:#a0a6ad'></div>
<div class='b' style='left:244px;top:347px;width:3px;height:1px;background:#a0a6ad'></div>
<div class='b' style='left:244px;top:349px;width:3px;height:1px;background:#a0a6ad'></div>
<div class='b' style='left:244px;top:351px;width:3px;height:1px;background:#a0a6ad'></div>
<div class='b' style='left:249px;top:27px;width:602px;height:1px;background:#a0a0a0'></div>
<div class='b' style='left:249px;top:28px;width:602px;height:1px;background:#fff'></div>
<div class='b' style='left:258px;top:7px;width:184px;height:20px;background:linear-gradient(#fcfcfc,#e8e8e8);border:1px solid #a9a9a9;border-bottom:none;border-radius:3px 3px 0 0;box-sizing:border-box'></div>
<svg class='b' style='left:264px;top:8px;' width='14' height='18' viewBox='0 0 14 18'><path d='M0 0 L13 8.5 L0 17Z' fill='#989898'/></svg>
<div class='t' style='left:282.5px;top:11.69px;font-size:11px;font-weight:400;color:#000;transform:scaleX(0.9767);transform-origin:0 0;'>1: Pivot-OMS-aggregate.sql</div>
<svg class='b' style='left:428px;top:14px;' width='9' height='8' viewBox='0 0 9 8'><path d='M0.8 0.5 L8.2 7.5 M8.2 0.5 L0.8 7.5' stroke='#000' stroke-width='1.35'/></svg>
<div class='b' style='left:441px;top:5px;width:212px;height:24px;background:#fff;border-left:1px solid #a0a0a0;border-right:1px solid #a0a0a0;box-sizing:border-box'></div>
<div class='b' style='left:442px;top:5px;width:210px;height:3px;background:#0f6fd6;border-top-left-radius:2px;border-top-right-radius:2px'></div>
<svg class='b' style='left:448px;top:9px;' width='17' height='17' viewBox='0 0 17 17'><g shape-rendering='crispEdges'><rect x='1' y='1' width='14' height='15' fill='#2288d8'/><rect x='2' y='2' width='12' height='13' fill='#fff'/><g fill='#a6d1f3'><rect x='2' y='2' width='3' height='3'/><rect x='2' y='6' width='3' height='2'/><rect x='2' y='9' width='3' height='2'/><rect x='2' y='12' width='3' height='3'/><rect x='6' y='2' width='3' height='3'/><rect x='6' y='6' width='3' height='2'/><rect x='6' y='9' width='3' height='2'/><rect x='6' y='12' width='3' height='3'/><rect x='10' y='2' width='4' height='3'/><rect x='10' y='6' width='4' height='2'/><rect x='10' y='9' width='4' height='2'/><rect x='10' y='12' width='4' height='3'/></g></g></svg>
<div class='t' style='left:467.7px;top:11.69px;font-size:11px;font-weight:700;color:#000;transform:scaleX(1.0976);transform-origin:0 0;'>Sakila H2 (dbvis/test): FILM</div>
<svg class='b' style='left:636px;top:14px;' width='9' height='8' viewBox='0 0 9 8'><path d='M0.8 0.5 L8.2 7.5 M8.2 0.5 L0.8 7.5' stroke='#000' stroke-width='1.35'/></svg>
<div class='b' style='left:652px;top:7px;width:142px;height:20px;background:linear-gradient(#fcfcfc,#e8e8e8);border-top:1px solid #a9a9a9;border-right:none;box-sizing:border-box;overflow:hidden'></div>
<svg class='b' style='left:657px;top:10px;' width='16' height='16' viewBox='0 0 16 16'><rect x='0' y='0' width='14' height='15' fill='#1a86d8'/><g fill='#fff'><rect x='1' y='1' width='3' height='2.5'/><rect x='5' y='1' width='3' height='2.5'/><rect x='9' y='1' width='4' height='2.5'/><rect x='1' y='4.5' width='3' height='2.5'/><rect x='5' y='4.5' width='3' height='2.5'/><rect x='9' y='4.5' width='4' height='2.5'/><rect x='1' y='8' width='3' height='2.5'/><rect x='5' y='8' width='3' height='2.5'/><rect x='1' y='11.5' width='3' height='2.5'/></g><circle cx='12' cy='10' r='3' fill='#eef' stroke='#888'/><path d='M10 12 L7 15' stroke='#c08040' stroke-width='1.6'/></svg>
<div class='b' style='left:652px;top:7px;width:141px;height:21px;overflow:hidden'>
<div class='t' style='left:23px;top:4.69px;font-size:11px;color:#000;transform:scaleX(0.97);transform-origin:0 0'>Sakila H2 (dbvis/test): CUSTOMER</div>
</div>
<svg class='b' style='left:802px;top:12px;' width='7' height='10' viewBox='0 0 7 10'><path d='M6 0.5 L1 5 L6 9.5Z' fill='none' stroke='#000' stroke-width='1'/></svg>
<svg class='b' style='left:820px;top:12px;' width='6' height='10' viewBox='0 0 6 10'><path d='M0 0 L5.5 5 L0 10Z' fill='#000'/></svg>
<svg class='b' style='left:834px;top:12px;' width='9' height='10' viewBox='0 0 9 10'><rect x='0.5' y='0.5' width='7' height='8' fill='none' stroke='#000'/><path d='M2 2.5H6M2 4.5H6M2 6.5H6' stroke='#000'/></svg>
<div class='b' style='left:249px;top:29px;width:602px;height:53px;background:#a0a0a0'></div>
<svg class='b' style='left:251px;top:30px;' width='21' height='22' viewBox='0 0 21 22'><g shape-rendering='crispEdges'><rect x='0' y='0' width='21' height='22' fill='#1f86d6'/><g fill='#fff'><rect x='1' y='2' width='3' height='3'/><rect x='1' y='6' width='3' height='3'/><rect x='1' y='10' width='3' height='3'/><rect x='1' y='14' width='3' height='3'/><rect x='1' y='18' width='3' height='3'/><rect x='5' y='2' width='3' height='3'/><rect x='5' y='6' width='3' height='3'/><rect x='5' y='10' width='3' height='3'/><rect x='5' y='14' width='3' height='3'/><rect x='5' y='18' width='3' height='3'/><rect x='9' y='2' width='3' height='3'/><rect x='9' y='6' width='3' height='3'/><rect x='9' y='10' width='3' height='3'/><rect x='9' y='14' width='3' height='3'/><rect x='9' y='18' width='3' height='3'/><rect x='13' y='2' width='3' height='3'/><rect x='13' y='6' width='3' height='3'/><rect x='13' y='10' width='3' height='3'/><rect x='13' y='14' width='3' height='3'/><rect x='13' y='18' width='3' height='3'/><rect x='17' y='2' width='3' height='3'/><rect x='17' y='6' width='3' height='3'/><rect x='17' y='10' width='3' height='3'/><rect x='17' y='14' width='3' height='3'/><rect x='17' y='18' width='3' height='3'/></g><g fill='#bfe0f8'><rect x='1' y='4' width='3' height='1'/><rect x='1' y='8' width='3' height='1'/><rect x='1' y='12' width='3' height='1'/><rect x='1' y='16' width='3' height='1'/><rect x='1' y='20' width='3' height='1'/><rect x='5' y='4' width='3' height='1'/><rect x='5' y='8' width='3' height='1'/><rect x='5' y='12' width='3' height='1'/><rect x='5' y='16' width='3' height='1'/><rect x='5' y='20' width='3' height='1'/><rect x='9' y='4' width='3' height='1'/><rect x='9' y='8' width='3' height='1'/><rect x='9' y='12' width='3' height='1'/><rect x='9' y='16' width='3' height='1'/><rect x='9' y='20' width='3' height='1'/><rect x='13' y='4' width='3' height='1'/><rect x='13' y='8' width='3' height='1'/><rect x='13' y='12' width='3' height='1'/><rect x='13' y='16' width='3' height='1'/><rect x='13' y='20' width='3' height='1'/><rect x='17' y='4' width='3' height='1'/><rect x='17' y='8' width='3' height='1'/><rect x='17' y='12' width='3' height='1'/><rect x='17' y='16' width='3' height='1'/><rect x='17' y='20' width='3' height='1'/></g></g></svg>
<div class='t' style='left:279.5px;top:34.00px;font-size:15px;font-weight:700;color:#fff;transform:scaleX(1.0736);transform-origin:0 0;'>Table: FILM</div>
<div class='t' style='left:249.2px;top:59.53px;font-size:10px;font-weight:400;color:#2222ff;transform:scaleX(1.0087);transform-origin:0 0;'>Sakila H2 (dbvis/test)/Schemas/SAKILA/Tables/FILM</div>
<div class='b' style='left:784px;top:30px;width:67px;height:24px;border:1px solid #f4f4f4;box-sizing:border-box'></div>
<div class='b' style='left:785px;top:31px;width:65px;height:22px;border:1px solid #b4b4b4;background:#e6e6e6;box-sizing:border-box'></div>
<div class='t' style='left:789.5px;top:36.69px;font-size:11px;font-weight:400;color:#000;transform:scaleX(0.9693);transform-origin:0 0;'>Actions</div>
<svg class='b' style='left:830px;top:40px;' width='15' height='8' viewBox='0 0 15 8'><path d='M0 0 H14 L7 7Z' fill='#2a9ae6'/></svg>
<div class='b' style='left:249px;top:104px;width:602px;height:1px;background:#a0a0a0'></div>
<div class='b' style='left:249px;top:105px;width:602px;height:1px;background:#fafafa'></div>
<div class='b' style='left:253px;top:84px;width:34px;height:20px;background:linear-gradient(#fcfcfc,#e8e8e8);border-top:1px solid #a9a9a9;border-right:1px solid #a9a9a9;border-top-right-radius:3px;box-sizing:border-box'></div>
<div class='t' style='left:252.3px;top:88.69px;font-size:11px;font-weight:400;color:#000;transform:scaleX(1.0085);transform-origin:0 0;'>Count</div>
<div class='b' style='left:288px;top:84px;width:87px;height:20px;background:linear-gradient(#fcfcfc,#e8e8e8);border:1px solid #a9a9a9;border-bottom:none;border-radius:3px 3px 0 0;box-sizing:border-box'></div>
<svg class='b' style='left:292px;top:85px;' width='17' height='17' viewBox='0 0 17 17'><circle cx='13' cy='4' r='2.9' fill='none' stroke='#e5ad1c' stroke-width='1.9'/><path d='M10.9 6.1 L2.2 14.8' stroke='#e5ad1c' stroke-width='2' stroke-linecap='round'/><path d='M2 12.6 L4.6 15.2 M3.8 10.8 L5.8 12.8' stroke='#e5ad1c' stroke-width='1.5'/></svg>
<div class='t' style='left:311.7px;top:88.69px;font-size:11px;font-weight:400;color:#000;transform:scaleX(0.9693);transform-origin:0 0;'>Primary Key</div>
<div class='b' style='left:376px;top:84px;width:69px;height:20px;background:linear-gradient(#fcfcfc,#e8e8e8);border:1px solid #a9a9a9;border-bottom:none;border-radius:3px 3px 0 0;box-sizing:border-box'></div>
<svg class='b' style='left:380px;top:87px;' width='18' height='16' viewBox='0 0 18 16'><path d='M2 2.5 H5 V1 H16 V8 H2Z' fill='#f9d658'/><rect x='5' y='1' width='7' height='1.5' fill='#eab420'/><path d='M1 7 H17 V10 H16 V13.5 Q16 14.8 14.8 14.8 H3.2 Q2 14.8 2 13.5 V10 H1Z' fill='#7d8b9a'/><rect x='3' y='9' width='12' height='4.5' fill='#8a98a6'/></svg>
<div class='t' style='left:400px;top:88.69px;font-size:11px;font-weight:400;color:#000;transform:scaleX(1.0258);transform-origin:0 0;'>Indexes</div>
<div class='b' style='left:446px;top:84px;width:62px;height:20px;background:linear-gradient(#fcfcfc,#e8e8e8);border:1px solid #a9a9a9;border-bottom:none;border-radius:3px 3px 0 0;box-sizing:border-box'></div>
<svg class='b' style='left:450px;top:85px;' width='17' height='18' viewBox='0 0 17 18'><path d='M7.5 5 L1.5 12.5' stroke='#7c8894' stroke-width='2.2' stroke-linecap='round'/><circle cx='9' cy='4' r='3' fill='#dfeefa' stroke='#7c8894' stroke-width='1.6'/><circle cx='11.5' cy='5' r='3' fill='none' stroke='#68b8ee' stroke-width='1.2'/><circle cx='11' cy='7' r='2.6' fill='none' stroke='#e8b020' stroke-width='1.7'/><path d='M11 9.5 V16.5 M11 13 H13.2 M11 15.5 H13.2' stroke='#e8b020' stroke-width='1.8'/></svg>
<div class='t' style='left:469px;top:88.69px;font-size:11px;font-weight:400;color:#000;transform:scaleX(0.9839);transform-origin:0 0;'>Grants</div>
<div class='b' style='left:509px;top:84px;width:64px;height:20px;background:linear-gradient(#fcfcfc,#e8e8e8);border:1px solid #a9a9a9;border-bottom:none;border-radius:3px 3px 0 0;box-sizing:border-box'></div>
<svg class='b' style='left:513px;top:85px;' width='17' height='18' viewBox='0 0 17 18'><path d='M7.5 9 L1.5 15.5' stroke='#88c2ee' stroke-width='2.4' stroke-linecap='round'/><rect x='8' y='1.5' width='8' height='8' rx='2' transform='rotate(45 12 5.5)' fill='#6d7a86'/><circle cx='13.2' cy='4.3' r='1.2' fill='#dfe6ec'/></svg>
<div class='t' style='left:532px;top:88.69px;font-size:11px;font-weight:400;color:#000;transform:scaleX(1.0075);transform-origin:0 0;'>Row Id</div>
<div class='b' style='left:574px;top:84px;width:49px;height:20px;background:linear-gradient(#fcfcfc,#e8e8e8);border:1px solid #a9a9a9;border-bottom:none;border-radius:3px 3px 0 0;box-sizing:border-box'></div>
<svg class='b' style='left:578px;top:85px;' width='17' height='18' viewBox='0 0 17 18'><path d='M11 6 L2 15.5' stroke='#c27a30' stroke-width='2.8' stroke-linecap='round'/><path d='M5.5 3.5 L9.5 0.8 L16.5 6 L14.5 8.5 L11 6.5 L8 8.5Z' fill='#8a96a2'/></svg>
<div class='t' style='left:597.5px;top:88.69px;font-size:11px;font-weight:400;color:#000;transform:scaleX(0.8708);transform-origin:0 0;'>DDL</div>
<div class='b' style='left:622px;top:82px;width:99px;height:23px;background:#fff;border-left:1px solid #a0a0a0;border-right:1px solid #a0a0a0;box-sizing:border-box'></div>
<div class='b' style='left:623px;top:82px;width:97px;height:3px;background:#0f6fd6'></div>
<svg class='b' style='left:628px;top:87px;' width='17' height='16' viewBox='0 0 17 16'><path d='M5.5 7.5 L10.5 2.5 M5.5 7.5 L10.5 12.5' stroke='#3c4652' stroke-width='1.1' fill='none'/><g fill='#2b9be9' shape-rendering='crispEdges'><rect x='0' y='5' width='6' height='5'/><rect x='10' y='0' width='6' height='5'/><rect x='10' y='10' width='6' height='5'/></g></svg>
<div class='t' style='left:648.7px;top:88.69px;font-size:11px;font-weight:700;color:#000;transform:scaleX(1.063);transform-origin:0 0;'>References</div>
<div class='b' style='left:721px;top:84px;width:73px;height:20px;background:linear-gradient(#fcfcfc,#e8e8e8);border-top:1px solid #a9a9a9;box-sizing:border-box'></div>
<svg class='b' style='left:725px;top:85px;' width='15' height='18' viewBox='0 0 15 18'><rect x='6' y='1' width='2' height='1.5' fill='#8a96a2'/><path d='M5.6 6.5 L1 17 M8.4 6.5 L13 17' stroke='#7d8a96' stroke-width='1.2' fill='none'/><circle cx='7' cy='5' r='2.4' fill='none' stroke='#3a9ae8' stroke-width='1.6'/><path d='M3.5 11 Q7.5 13.5 11.5 8.5' stroke='#3a9ae8' stroke-width='1.5' fill='none'/></svg>
<div class='t' style='left:743px;top:88.69px;font-size:11px;font-weight:400;color:#000;transform:scaleX(1.007);transform-origin:0 0;'>Navigator</div>
<svg class='b' style='left:803px;top:89px;' width='6' height='10' viewBox='0 0 6 10'><path d='M5.5 0 L0 5 L5.5 10Z' fill='#000'/></svg>
<svg class='b' style='left:820px;top:89px;' width='6' height='10' viewBox='0 0 6 10'><path d='M0 0 L5.5 5 L0 10Z' fill='#000'/></svg>
<svg class='b' style='left:834px;top:89px;' width='9' height='10' viewBox='0 0 9 10'><rect x='0.5' y='0.5' width='7' height='8' fill='none' stroke='#000'/><path d='M2 2.5H6M2 4.5H6M2 6.5H6' stroke='#000'/></svg>
<svg class='b' style='left:252px;top:115px;' width='17' height='16' viewBox='0 0 17 16'><g fill='none' stroke='#2a9ae6' stroke-width='2.2'><path d='M7 3 H5 A4 4 0 0 0 5 11'/><path d='M10 12 H12 A4 4 0 0 0 12 4'/></g><path d='M7 0 L11 3 L7 6Z' fill='#2a9ae6'/><path d='M10 9 L6 12 L10 15Z' fill='#2a9ae6'/></svg>
<svg class='b' style='left:274px;top:115px;' width='16' height='16' viewBox='0 0 16 16'><path d='M5 0.5 H11 L15.5 5 V11 L11 15.5 H5 L0.5 11 V5Z' fill='#8e8e8e'/><text x='8' y='10.2' font-size='5.6' font-family='Liberation Sans' font-weight='700' fill='#fff' text-anchor='middle' textLength='12' lengthAdjust='spacingAndGlyphs'>STOP</text></svg>
<div class='b' style='left:295px;top:112px;width:1px;height:20px;background:#a0a0a0'></div>
<svg class='b' style='left:301px;top:115px;' width='17' height='16' viewBox='0 0 17 16'><path d='M7.5 7 L2 13.5' stroke='#c8782a' stroke-width='2.4' stroke-linecap='round'/><path d='M1 3.5 L5 0.8 L10 3 L8.5 5.5 L6 4.5 L3.5 6Z' fill='#8f9ca8'/><path d='M6 6 L13.5 13.5' stroke='#9aa6b0' stroke-width='2.6' stroke-linecap='round'/><path d='M11 1.5 A3 3 0 1 0 15.5 5.5 L13.2 5 L11.8 3.2Z' fill='#9aa6b0'/></svg>
<div class='b' style='left:322px;top:112px;width:1px;height:20px;background:#a0a0a0'></div>
<svg class='b' style='left:330px;top:114px;' width='12' height='17' viewBox='0 0 12 17'><path d='M6 0 L11.5 6 H8.5 V10 H3.5 V6 H0.5Z' fill='#e0302a'/><rect x='0.5' y='11' width='11' height='5' fill='#c8d0d8'/></svg>
<div class='b' style='left:349px;top:112px;width:1px;height:20px;background:#a0a0a0'></div>
<svg class='b' style='left:355px;top:114px;' width='17' height='17' viewBox='0 0 17 17'><circle cx='10.5' cy='6' r='5.2' fill='#eef5fb' stroke='#5d6d7c' stroke-width='1.4'/><path d='M6.8 9.8 L1.5 15.2' stroke='#c8782a' stroke-width='2.6'/><path d='M8 6 H13 M10.5 3.5 V8.5' stroke='#2aa830' stroke-width='1.6'/></svg>
<svg class='b' style='left:376px;top:114px;' width='17' height='17' viewBox='0 0 17 17'><circle cx='10.5' cy='6' r='5.2' fill='#eef5fb' stroke='#5d6d7c' stroke-width='1.4'/><path d='M6.8 9.8 L1.5 15.2' stroke='#c8782a' stroke-width='2.6'/><path d='M8 6 H13' stroke='#e0302a' stroke-width='1.8'/></svg>
<svg class='b' style='left:399px;top:114px;' width='16' height='16' viewBox='0 0 16 16'><g fill='#5a6470'><rect x='0' y='0' width='1' height='1'/><rect x='0' y='15' width='1' height='1'/><rect x='0' y='0' width='1' height='1'/><rect x='15' y='0' width='1' height='1'/><rect x='2' y='0' width='1' height='1'/><rect x='2' y='15' width='1' height='1'/><rect x='0' y='2' width='1' height='1'/><rect x='15' y='2' width='1' height='1'/><rect x='4' y='0' width='1' height='1'/><rect x='4' y='15' width='1' height='1'/><rect x='0' y='4' width='1' height='1'/><rect x='15' y='4' width='1' height='1'/><rect x='6' y='0' width='1' height='1'/><rect x='6' y='15' width='1' height='1'/><rect x='0' y='6' width='1' height='1'/><rect x='15' y='6' width='1' height='1'/><rect x='8' y='0' width='1' height='1'/><rect x='8' y='15' width='1' height='1'/><rect x='0' y='8' width='1' height='1'/><rect x='15' y='8' width='1' height='1'/><rect x='10' y='0' width='1' height='1'/><rect x='10' y='15' width='1' height='1'/><rect x='0' y='10' width='1' height='1'/><rect x='15' y='10' width='1' height='1'/><rect x='12' y='0' width='1' height='1'/><rect x='12' y='15' width='1' height='1'/><rect x='0' y='12' width='1' height='1'/><rect x='15' y='12' width='1' height='1'/><rect x='14' y='0' width='1' height='1'/><rect x='14' y='15' width='1' height='1'/><rect x='0' y='14' width='1' height='1'/><rect x='15' y='14' width='1' height='1'/></g></svg>
<svg class='b' style='left:421px;top:114px;' width='17' height='17' viewBox='0 0 17 17'><circle cx='10.5' cy='6' r='5.2' fill='#eef5fb' stroke='#5d6d7c' stroke-width='1.4'/><path d='M6.8 9.8 L1.5 15.2' stroke='#c8782a' stroke-width='2.6'/><text x='10.5' y='8' font-size='5.5' font-family='Liberation Sans' fill='#334' text-anchor='middle'>1:1</text></svg>
<svg class='b' style='left:442px;top:114px;' width='17' height='17' viewBox='0 0 17 17'><circle cx='10.5' cy='6' r='5.2' fill='#eef5fb' stroke='#5d6d7c' stroke-width='1.4'/><path d='M6.8 9.8 L1.5 15.2' stroke='#c8782a' stroke-width='2.6'/></svg>
<svg class='b' style='left:465px;top:114px;' width='17' height='17' viewBox='0 0 17 17'><path d='M2.5 0V16 M13.5 0V16 M0 2.5H16 M0 13.5H16' stroke='#5b6b7a' stroke-width='1.1'/><g fill='#e0302a'><path d='M8 3.5 L6.5 5.5 H9.5Z'/><path d='M8 12.5 L6.5 10.5 H9.5Z'/><path d='M3.5 8 L5.5 6.5 V9.5Z'/><path d='M12.5 8 L10.5 6.5 V9.5Z'/></g></svg>
<svg class='b' style='left:487px;top:114px;' width='17' height='17' viewBox='0 0 17 17'><path d='M5.5 2V15 M8.5 2V15 M11.5 2V15 M2 5.5H15 M2 8.5H15 M2 11.5H15' stroke='#a9d2f2' stroke-width='1'/><path d='M2.5 0V17 M14.5 0V17 M0 2.5H17 M0 14.5H17' stroke='#5b6b7a' stroke-width='1.1'/><rect x='6' y='6' width='5' height='5' fill='#1e8ee4'/></svg>
<div class='b' style='left:508px;top:112px;width:1px;height:20px;background:#a0a0a0'></div>
<svg class='b' style='left:513px;top:117px;' width='17' height='12' viewBox='0 0 17 12'><path d='M3 6 Q3 1 6.5 1 H10.5 Q14 1 14 6Z' fill='#3f4b57'/><circle cx='4.5' cy='7' r='3.9' fill='#2a8ee0' stroke='#1f5f9a' stroke-width='0.9'/><circle cx='12.5' cy='7' r='3.9' fill='#2a8ee0' stroke='#1f5f9a' stroke-width='0.9'/><circle cx='4' cy='6.3' r='1.6' fill='#6cc0f8'/><circle cx='12' cy='6.3' r='1.6' fill='#6cc0f8'/></svg>
<svg class='b' style='left:535px;top:114px;' width='18' height='18' viewBox='0 0 18 18'><defs><linearGradient id='cg' x1='0' y1='0' x2='0' y2='1'><stop offset='0' stop-color='#f2f6fa'/><stop offset='1' stop-color='#c5d3df'/></linearGradient></defs><circle cx='9' cy='9' r='7.3' fill='url(#cg)' stroke='#2f95e0' stroke-width='1.7'/><path d='M13 5 L9.8 10 L8 8.2Z' fill='#e8402e'/><path d='M5 13 L8 8.2 L9.8 10Z' fill='#fff' stroke='#9aa' stroke-width='0.4'/></svg>
<div class='b' style='left:557px;top:112px;width:1px;height:20px;background:#a0a0a0'></div>
<svg class='b' style='left:562px;top:114px;' width='18' height='17' viewBox='0 0 18 17'><circle cx='4' cy='4' r='3' fill='#ccc' stroke='#bbb'/><rect x='3' y='6' width='14' height='9' fill='#e4e4e4' stroke='#c8c8c8'/><circle cx='13' cy='11' r='2.5' fill='#fff' stroke='#aaa'/><path d='M11 13 L9 15' stroke='#bbb' stroke-width='1.5'/></svg>
<div class='b' style='left:584px;top:112px;width:1px;height:20px;background:#a0a0a0'></div>
<div class='t' style='left:586px;top:116.69px;font-size:11px;font-weight:400;color:#000;transform:scaleX(1.01);transform-origin:0 0;'>Layout: Orthogonal</div>
<svg class='b' style='left:690px;top:121px;' width='7' height='4' viewBox='0 0 7 4'><path d='M0 0H6L3 3Z' fill='#000'/></svg>
<div class='b' style='left:249px;top:138px;width:601px;height:523px;background:#fff;border:1px solid #a0a0a0;box-sizing:border-box'></div>
<div class='b' style='left:249px;top:661px;width:602px;height:1px;background:#fff'></div>
<div class='b' style='left:850px;top:138px;width:1px;height:524px;background:#fff'></div>
<div class='t' style='left:261.2px;top:637.84px;font-size:12px;font-weight:400;color:#c4c4c4;transform:scaleX(1.0057);transform-origin:0 0;'>Powered by yFiles</div>
<div class='b' style='left:694px;top:664px;width:29px;height:20px;border:1px solid #a3a3a3;box-sizing:border-box'></div>
<div class='t' style='left:696.8px;top:668.69px;font-size:11px;font-weight:400;color:#000;transform:scaleX(1.0603);transform-origin:0 0;'>77%</div>
<div class='b' style='left:725px;top:664px;width:50px;height:20px;border:1px solid #a3a3a3;box-sizing:border-box'></div>
<div class='t' style='left:727.6px;top:668.69px;font-size:11px;font-weight:400;color:#000;transform:scaleX(1.0132);transform-origin:0 0;'>Tables: 5</div>
<div class='b' style='left:777px;top:664px;width:74px;height:20px;border:1px solid #a3a3a3;box-sizing:border-box'></div>
<div class='t' style='left:779.1px;top:668.69px;font-size:11px;font-weight:400;color:#000;transform:scaleX(0.9973);transform-origin:0 0;'>References: 5</div>
<svg class='b' style='left:0;top:0' width='854' height='685' viewBox='0 0 854 685' font-family="'Liberation Sans', sans-serif">
<g stroke='#8e8e8e' stroke-width='1.2' fill='none'>
<line x1='550.7' y1='262' x2='550.7' y2='295'/>
<line x1='570.3' y1='262' x2='570.3' y2='295'/>
<line x1='550.8' y1='509' x2='550.8' y2='542.5'/>
<line x1='415' y1='400.5' x2='443' y2='400.5'/>
<line x1='658' y1='400.5' x2='688' y2='400.5'/>
</g>
<path transform='translate(550.7,258) rotate(0)' d='M0 0 L3.7 8.8 L0 5.8 L-3.7 8.8Z' fill='#8e8e8e'/>
<path transform='translate(570.3,258) rotate(0)' d='M0 0 L3.7 8.8 L0 5.8 L-3.7 8.8Z' fill='#8e8e8e'/>
<path transform='translate(550.8,505) rotate(0)' d='M0 0 L3.7 8.8 L0 5.8 L-3.7 8.8Z' fill='#8e8e8e'/>
<path transform='translate(447.8,400.5) rotate(90)' d='M0 0 L3.7 8.8 L0 5.8 L-3.7 8.8Z' fill='#8e8e8e'/>
<path transform='translate(654.2,400.5) rotate(-90)' d='M0 0 L3.7 8.8 L0 5.8 L-3.7 8.8Z' fill='#8e8e8e'/>
<rect x='479.5' y='191.5' width='142' height='66' fill='#fffccc' stroke='#9c9c9c' stroke-width='1'/>
<line x1='479' y1='211.5' x2='622' y2='211.5' stroke='#9c9c9c' stroke-width='1'/>
<text x='551.6' y='207' font-size='10' text-anchor='middle' fill='#111' letter-spacing='0.2'>LANGUAGE</text>
<text x='500.5' y='225' font-size='8' font-weight='700' fill='#1b1b1b'>LANGUAGE_ID</text>
<text x='562.3' y='225' font-size='8' fill='#2e2e2e'>TINYINT</text>
<g transform='translate(482.5,215)'><circle cx='8.7' cy='3' r='2.3' fill='none' stroke='#e6a812' stroke-width='1.5'/><path d='M7.2 4.6 L1.6 10.4' stroke='#e6a812' stroke-width='1.9' stroke-linecap='round'/><path d='M2.2 8.2 L4 10 M3.6 6.8 L5 8.2' stroke='#e6a812' stroke-width='1.4'/></g>
<text x='500.5' y='238.6' font-size='8' font-weight='700' fill='#1b1b1b'>NAME</text>
<text x='562.3' y='238.6' font-size='8' fill='#2e2e2e'>CHAR(20)</text>
<text x='500.5' y='252.6' font-size='8' font-weight='700' fill='#1b1b1b'>LAST_UPDATE</text>
<text x='562.3' y='252.6' font-size='8' fill='#2e2e2e'>TIMESTAMP</text>
<rect x='448.5' y='295.5' width='205' height='209' fill='#fffccc' stroke='#9c9c9c' stroke-width='1'/>
<line x1='448' y1='315.5' x2='654' y2='315.5' stroke='#9c9c9c' stroke-width='1'/>
<text x='551.5' y='311' font-size='10' text-anchor='middle' fill='#111' letter-spacing='0.2'>FILM</text>
<text x='469.3' y='329.1' font-size='8' font-weight='700' fill='#1b1b1b'>FILM_ID</text>
<text x='572.9' y='329.1' font-size='8' fill='#2e2e2e'>SMALLINT</text>
<g transform='translate(452,319.1)'><circle cx='8.7' cy='3' r='2.3' fill='none' stroke='#e6a812' stroke-width='1.5'/><path d='M7.2 4.6 L1.6 10.4' stroke='#e6a812' stroke-width='1.9' stroke-linecap='round'/><path d='M2.2 8.2 L4 10 M3.6 6.8 L5 8.2' stroke='#e6a812' stroke-width='1.4'/></g>
<text x='469.3' y='342.7' font-size='8' font-weight='700' fill='#1b1b1b'>TITLE</text>
<text x='572.9' y='342.7' font-size='8' fill='#2e2e2e'>VARCHAR(128)</text>
<text x='469.3' y='357' font-size='8' fill='#2e2e2e'>DESCRIPTION</text>
<text x='572.9' y='357' font-size='8' fill='#2e2e2e'>CLOB</text>
<text x='469.3' y='370.6' font-size='8' fill='#2e2e2e'>RELEASE_YEAR</text>
<text x='572.9' y='370.6' font-size='8' fill='#2e2e2e'>SMALLINT</text>
<text x='469.3' y='386' font-size='8' font-weight='700' fill='#1b1b1b'>LANGUAGE_ID</text>
<text x='572.9' y='386' font-size='8' fill='#2e2e2e'>TINYINT</text>
<g transform='translate(638,376.7)'><path d='M0.8 9.4 L8.6 1.6' stroke='#1a80d8' stroke-width='1.7' stroke-linecap='round'/><path d='M5.2 1.2 H9.2 V5.2' fill='none' stroke='#1a80d8' stroke-width='1.6'/></g>
<text x='469.3' y='399.6' font-size='8' fill='#2e2e2e'>ORIGINAL_LANGUAGE_ID</text>
<text x='572.9' y='399.6' font-size='8' fill='#2e2e2e'>TINYINT</text>
<g transform='translate(638,390.3)'><path d='M0.8 9.4 L8.6 1.6' stroke='#1a80d8' stroke-width='1.7' stroke-linecap='round'/><path d='M5.2 1.2 H9.2 V5.2' fill='none' stroke='#1a80d8' stroke-width='1.6'/></g>
<text x='469.3' y='413.9' font-size='8' font-weight='700' fill='#1b1b1b'>RENTAL_DURATION</text>
<text x='572.9' y='413.9' font-size='8' fill='#2e2e2e'>TINYINT</text>
<text x='469.3' y='428.1' font-size='8' font-weight='700' fill='#1b1b1b'>RENTAL_RATE</text>
<text x='572.9' y='428.1' font-size='8' fill='#2e2e2e'>DECIMAL(4,2)</text>
<text x='469.3' y='441.8' font-size='8' fill='#2e2e2e'>LENGTH</text>
<text x='572.9' y='441.8' font-size='8' fill='#2e2e2e'>SMALLINT</text>
<text x='469.3' y='457.1' font-size='8' font-weight='700' fill='#1b1b1b'>REPLACEMENT_COST</text>
<text x='572.9' y='457.1' font-size='8' fill='#2e2e2e'>DECIMAL(5,2)</text>
<text x='469.3' y='470.8' font-size='8' fill='#2e2e2e'>RATING</text>
<text x='572.9' y='470.8' font-size='8' fill='#2e2e2e'>ENUM</text>
<text x='469.3' y='484.4' font-size='8' fill='#2e2e2e'>SPECIAL_FEATURES</text>
<text x='572.9' y='484.4' font-size='8' fill='#2e2e2e'>VARCHAR(256)</text>
<text x='469.3' y='498.7' font-size='8' font-weight='700' fill='#1b1b1b'>LAST_UPDATE</text>
<text x='572.9' y='498.7' font-size='8' fill='#2e2e2e'>TIMESTAMP</text>
<rect x='259.5' y='359.5' width='155' height='81' fill='#fffccc' stroke='#9c9c9c' stroke-width='1'/>
<line x1='259' y1='379.5' x2='415' y2='379.5' stroke='#9c9c9c' stroke-width='1'/>
<text x='336.7' y='375' font-size='10' text-anchor='middle' fill='#111' letter-spacing='0.2'>INVENTORY</text>
<text x='279.1' y='392.9' font-size='8' font-weight='700' fill='#1b1b1b'>INVENTORY_ID</text>
<text x='342.1' y='392.9' font-size='8' fill='#2e2e2e'>INTEGER</text>
<g transform='translate(262.5,382.9)'><circle cx='8.7' cy='3' r='2.3' fill='none' stroke='#e6a812' stroke-width='1.5'/><path d='M7.2 4.6 L1.6 10.4' stroke='#e6a812' stroke-width='1.9' stroke-linecap='round'/><path d='M2.2 8.2 L4 10 M3.6 6.8 L5 8.2' stroke='#e6a812' stroke-width='1.4'/></g>
<text x='279.1' y='407' font-size='8' font-weight='700' fill='#1b1b1b'>FILM_ID</text>
<text x='342.1' y='407' font-size='8' fill='#2e2e2e'>SMALLINT</text>
<g transform='translate(399,397.7)'><path d='M0.8 9.4 L8.6 1.6' stroke='#1a80d8' stroke-width='1.7' stroke-linecap='round'/><path d='M5.2 1.2 H9.2 V5.2' fill='none' stroke='#1a80d8' stroke-width='1.6'/></g>
<text x='279.1' y='421' font-size='8' font-weight='700' fill='#1b1b1b'>STORE_ID</text>
<text x='342.1' y='421' font-size='8' fill='#2e2e2e'>TINYINT</text>
<g transform='translate(399,411.7)'><path d='M0.8 9.4 L8.6 1.6' stroke='#1a80d8' stroke-width='1.7' stroke-linecap='round'/><path d='M5.2 1.2 H9.2 V5.2' fill='none' stroke='#1a80d8' stroke-width='1.6'/></g>
<text x='279.1' y='434.6' font-size='8' font-weight='700' fill='#1b1b1b'>LAST_UPDATE</text>
<text x='342.1' y='434.6' font-size='8' fill='#2e2e2e'>TIMESTAMP</text>
<rect x='688.5' y='367.5' width='153' height='65' fill='#fffccc' stroke='#9c9c9c' stroke-width='1'/>
<line x1='688' y1='386.5' x2='842' y2='386.5' stroke='#9c9c9c' stroke-width='1'/>
<text x='764.9' y='382.3' font-size='10' text-anchor='middle' fill='#111' letter-spacing='0.2'>FILM_ACTOR</text>
<text x='709.2' y='400.2' font-size='8' font-weight='700' fill='#1b1b1b'>ACTOR_ID</text>
<text x='769' y='400.2' font-size='8' fill='#2e2e2e'>SMALLINT</text>
<g transform='translate(691.8,390.2)'><circle cx='8.7' cy='3' r='2.3' fill='none' stroke='#e6a812' stroke-width='1.5'/><path d='M7.2 4.6 L1.6 10.4' stroke='#e6a812' stroke-width='1.9' stroke-linecap='round'/><path d='M2.2 8.2 L4 10 M3.6 6.8 L5 8.2' stroke='#e6a812' stroke-width='1.4'/></g>
<g transform='translate(826.3,390.9)'><path d='M0.8 9.4 L8.6 1.6' stroke='#1a80d8' stroke-width='1.7' stroke-linecap='round'/><path d='M5.2 1.2 H9.2 V5.2' fill='none' stroke='#1a80d8' stroke-width='1.6'/></g>
<text x='709.2' y='414' font-size='8' font-weight='700' fill='#1b1b1b'>FILM_ID</text>
<text x='769' y='414' font-size='8' fill='#2e2e2e'>SMALLINT</text>
<g transform='translate(691.8,404)'><circle cx='8.7' cy='3' r='2.3' fill='none' stroke='#e6a812' stroke-width='1.5'/><path d='M7.2 4.6 L1.6 10.4' stroke='#e6a812' stroke-width='1.9' stroke-linecap='round'/><path d='M2.2 8.2 L4 10 M3.6 6.8 L5 8.2' stroke='#e6a812' stroke-width='1.4'/></g>
<g transform='translate(826.3,404.7)'><path d='M0.8 9.4 L8.6 1.6' stroke='#1a80d8' stroke-width='1.7' stroke-linecap='round'/><path d='M5.2 1.2 H9.2 V5.2' fill='none' stroke='#1a80d8' stroke-width='1.6'/></g>
<text x='709.2' y='428.1' font-size='8' font-weight='700' fill='#1b1b1b'>LAST_UPDATE</text>
<text x='769' y='428.1' font-size='8' fill='#2e2e2e'>TIMESTAMP</text>
<rect x='474.5' y='542.5' width='153' height='66' fill='#fffccc' stroke='#9c9c9c' stroke-width='1'/>
<line x1='474' y1='561.5' x2='628' y2='561.5' stroke='#9c9c9c' stroke-width='1'/>
<text x='551' y='557.2' font-size='10' text-anchor='middle' fill='#111' letter-spacing='0.2'>FILM_CATEGORY</text>
<text x='494.1' y='574.7' font-size='8' font-weight='700' fill='#1b1b1b'>FILM_ID</text>
<text x='555.1' y='574.7' font-size='8' fill='#2e2e2e'>SMALLINT</text>
<g transform='translate(477.4,564.7)'><circle cx='8.7' cy='3' r='2.3' fill='none' stroke='#e6a812' stroke-width='1.5'/><path d='M7.2 4.6 L1.6 10.4' stroke='#e6a812' stroke-width='1.9' stroke-linecap='round'/><path d='M2.2 8.2 L4 10 M3.6 6.8 L5 8.2' stroke='#e6a812' stroke-width='1.4'/></g>
<g transform='translate(612,565.4000000000001)'><path d='M0.8 9.4 L8.6 1.6' stroke='#1a80d8' stroke-width='1.7' stroke-linecap='round'/><path d='M5.2 1.2 H9.2 V5.2' fill='none' stroke='#1a80d8' stroke-width='1.6'/></g>
<text x='494.1' y='588.4' font-size='8' font-weight='700' fill='#1b1b1b'>CATEGORY_ID</text>
<text x='555.1' y='588.4' font-size='8' fill='#2e2e2e'>TINYINT</text>
<g transform='translate(477.4,578.4)'><circle cx='8.7' cy='3' r='2.3' fill='none' stroke='#e6a812' stroke-width='1.5'/><path d='M7.2 4.6 L1.6 10.4' stroke='#e6a812' stroke-width='1.9' stroke-linecap='round'/><path d='M2.2 8.2 L4 10 M3.6 6.8 L5 8.2' stroke='#e6a812' stroke-width='1.4'/></g>
<g transform='translate(612,579.1)'><path d='M0.8 9.4 L8.6 1.6' stroke='#1a80d8' stroke-width='1.7' stroke-linecap='round'/><path d='M5.2 1.2 H9.2 V5.2' fill='none' stroke='#1a80d8' stroke-width='1.6'/></g>
<text x='494.1' y='602.3' font-size='8' font-weight='700' fill='#1b1b1b'>LAST_UPDATE</text>
<text x='555.1' y='602.3' font-size='8' fill='#2e2e2e'>TIMESTAMP</text>
</svg>
</body></html>
